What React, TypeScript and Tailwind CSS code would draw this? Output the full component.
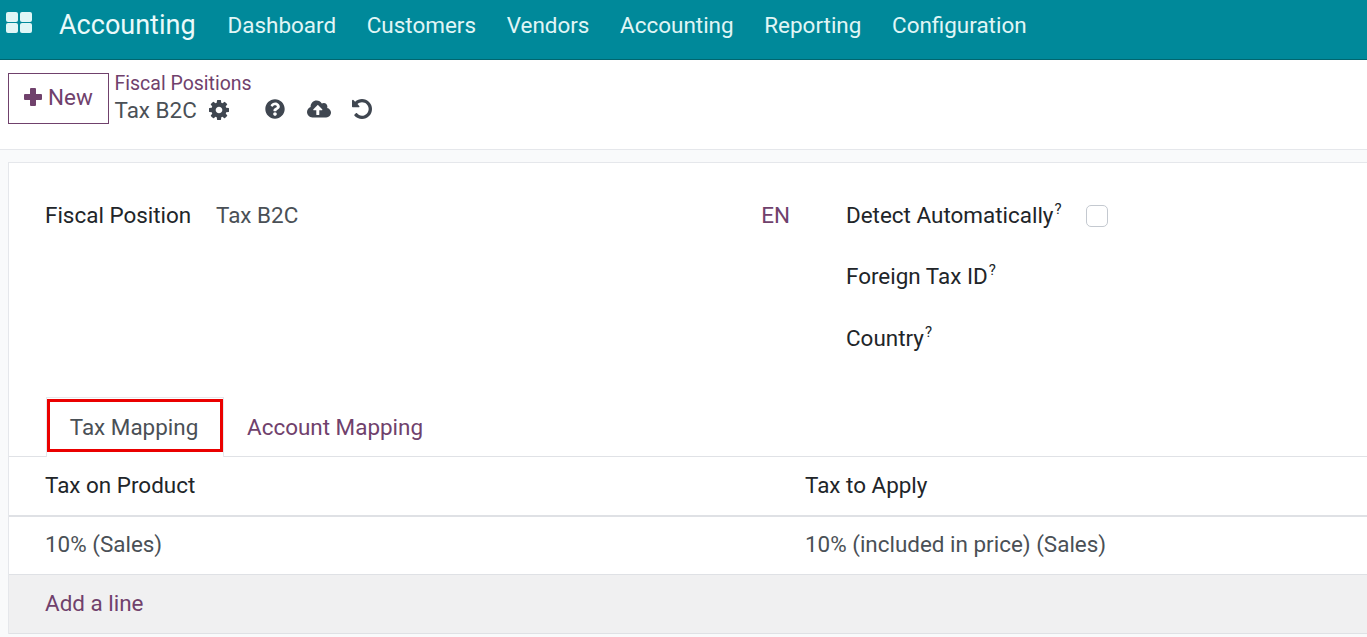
import { FaQuestionCircle, FaCloudUploadAlt } from 'react-icons/fa';

const navItems = ['Dashboard', 'Customers', 'Vendors', 'Accounting', 'Reporting', 'Configuration'];

function Help() {
  return <sup className="relative top-[-9px] ml-[1px] align-baseline text-[15px] leading-none text-[#212529]">?</sup>;
}

export default function App() {
  return (
    <div className="h-[637px] w-[1367px] overflow-hidden bg-[#f9fafb] font-['Roboto',sans-serif] text-[22.45px] leading-[26px] text-[#4a5056]">
      {/* Navbar */}
      <header className="flex h-[60px] items-center border-b border-[#01666f] bg-[#00899a] pb-[9px] text-[#e0f6f6]">
        <div className="ml-[6px] mb-[5px] grid h-[21px] w-[26px] grid-cols-2 gap-[1.5px]">
          <span className="rounded-[2px] bg-[#e0f6f6]" />
          <span className="rounded-[2px] bg-[#e0f6f6]" />
          <span className="rounded-[2px] bg-[#e0f6f6]" />
          <span className="rounded-[2px] bg-[#e0f6f6]" />
        </div>
        <span className="ml-[27px] text-[27px] text-[#eafafa]">Accounting</span>
        <nav className="ml-[32px] flex gap-[30.7px]">
          {navItems.map((item) => (
            <span key={item}>{item}</span>
          ))}
        </nav>
      </header>

      {/* Control panel */}
      <div className="flex h-[90px] items-start border-b border-[#e5e7eb] bg-white pl-[8px] pt-[13px]">
        <button className="flex h-[51px] w-[101px] items-center justify-center gap-[6px] border border-[#70416c] pb-[3px] text-[#70416c]">
          <svg viewBox="0 0 18 18" className="h-[18px] w-[18px] fill-[#70416c]">
            <path d="M6 1a1 1 0 0 1 1-1h4a1 1 0 0 1 1 1v5h5a1 1 0 0 1 1 1v4a1 1 0 0 1-1 1h-5v5a1 1 0 0 1-1 1H7a1 1 0 0 1-1-1v-5H1a1 1 0 0 1-1-1V7a1 1 0 0 1 1-1h5z" />
          </svg>
          New
        </button>
        <div className="ml-[5.5px]">
          <div className="pt-[1px] text-[19.5px] leading-[20px] text-[#70416c]">Fiscal Positions</div>
          <div className="mt-[1px] flex items-center leading-[30px]">
            <span>Tax B2C</span>
            <svg viewBox="128 128 1536 1536" className="ml-[12px] h-[20px] w-[20px] fill-[#3f4650]">
              <path d="M1152 896q0-106-75-181t-181-75-181 75-75 181 75 181 181 75 181-75 75-181zm512-109v222q0 12-8 23t-20 13l-185 28q-19 54-39 91 35 50 107 138 10 12 10 25t-9 23q-27 37-99 108t-94 71q-12 0-26-9l-138-108q-44 23-91 38-16 136-29 186-7 28-36 28h-222q-14 0-24.500-8.500t-11.500-21.500l-28-184q-49-16-90-37l-141 107q-10 9-25 9-14 0-25-11-126-114-165-168-7-10-7-23 0-12 8-23 15-21 51-66.500t54-70.500q-27-50-41-99l-183-27q-13-2-21-12.500t-8-23.500v-222q0-12 8-23t19-13l186-28q14-46 39-92-40-57-107-138-10-12-10-24 0-10 9-23 26-36 98.500-107.500t94.500-71.500q13 0 26 10l138 107q44-23 91-38 16-136 29-186 7-28 36-28h222q14 0 24.500 8.500t11.500 21.500l28 184q49 16 90 37l142-107q9-9 24-9 13 0 25 10 129 119 165 170 7 8 7 22 0 12-8 23-15 21-51 66.500t-54 70.500q26 50 41 98l183 28q13 2 21 12.500t8 23.500z" />
            </svg>
            <div className="mb-[3px] ml-[36px] flex items-center gap-[22px] text-[#3f4650]">
              <FaQuestionCircle className="h-[20px] w-[20px]" />
              <FaCloudUploadAlt className="h-[24px] w-[24px]" />
              <svg viewBox="128 128 1536 1536" className="ml-[-1px] h-[20px] w-[20px] fill-[#3f4650]">
                <path d="M1664 896q0 156-61 298t-164 245-245 164-298 61q-172 0-327-72.500t-264-204.500q-7-10-6.500-22.500t8.500-20.500l137-138q10-9 25-9 16 2 23 12 73 95 179 147t225 52q104 0 198.500-40.500t163.500-109.500 109.500-163.500 40.500-198.500-40.500-198.500-109.500-163.500-163.500-109.500-198.500-40.500q-98 0-188 35.500t-160 101.500l137 138q31 30 14 69-17 40-59 40h-448q-26 0-45-19t-19-45v-448q0-42 40-59 39-17 69 14l130 129q107-101 244.500-156.500t284.500-55.500q156 0 298 61t245 164 164 245 61 298z" />
              </svg>
            </div>
          </div>
        </div>
      </div>

      {/* Form sheet */}
      <main className="ml-[8px] mt-[12px] border-l border-t border-[#e5e7eb] bg-white">
        <div className="flex h-[235px] pl-[36px] pt-[39px]">
          <div className="flex w-[745px] items-start">
            <span className="w-[171px] text-[#212529]">Fiscal Position</span>
            <span>Tax B2C</span>
            <span className="ml-auto text-[#70416c]">EN</span>
          </div>
          <div className="ml-[56px] flex flex-col text-[#212529]">
            <div className="flex h-[26px] items-center">
              <span>
                Detect Automatically
                <Help />
              </span>
              <span className="ml-[24px] mt-[1px] h-[22px] w-[22px] rounded-[5px] border border-[#c4c9d0] bg-white" />
            </div>
            <span className="mt-[35px]">
              Foreign Tax ID
              <Help />
            </span>
            <span className="mt-[36px]">
              Country
              <Help />
            </span>
          </div>
        </div>

        {/* Tabs */}
        <div className="flex h-[59px] items-end border-b border-[#e0e2e6] pl-[37px]">
          <div className="relative z-10 mb-[-1px] flex h-[60px] w-[178px] items-center justify-center border-x border-t border-[#e5e7eb] border-b-white bg-white pb-[1px] pr-[2px]">
            Tax Mapping
            <div className="absolute left-[0px] top-[1px] h-[53px] w-[176px] border-[3px] border-[#ea0000]" />
          </div>
          <div className="flex h-[59px] items-center pl-[23px] text-[#70416c]">Account Mapping</div>
        </div>

        {/* Lines */}
        <div className="flex h-[60px] items-center border-b-2 border-[#dfe1e5] pb-[2px] pl-[36px] text-[#212529]">
          <span className="w-[760px]">Tax on Product</span>
          <span>Tax to Apply</span>
        </div>
        <div className="flex h-[58px] items-center border-b border-[#dfe1e5] pb-[3px] pl-[36px]">
          <span className="w-[760px]">10% (Sales)</span>
          <span>10% (included in price) (Sales)</span>
        </div>
        <div className="flex h-[59px] items-center border-b border-[#dfe1e5] bg-[#f0f0f1] pb-[2px] pl-[36px] text-[#70416c]">
          Add a line
        </div>
      </main>
    </div>
  );
}
